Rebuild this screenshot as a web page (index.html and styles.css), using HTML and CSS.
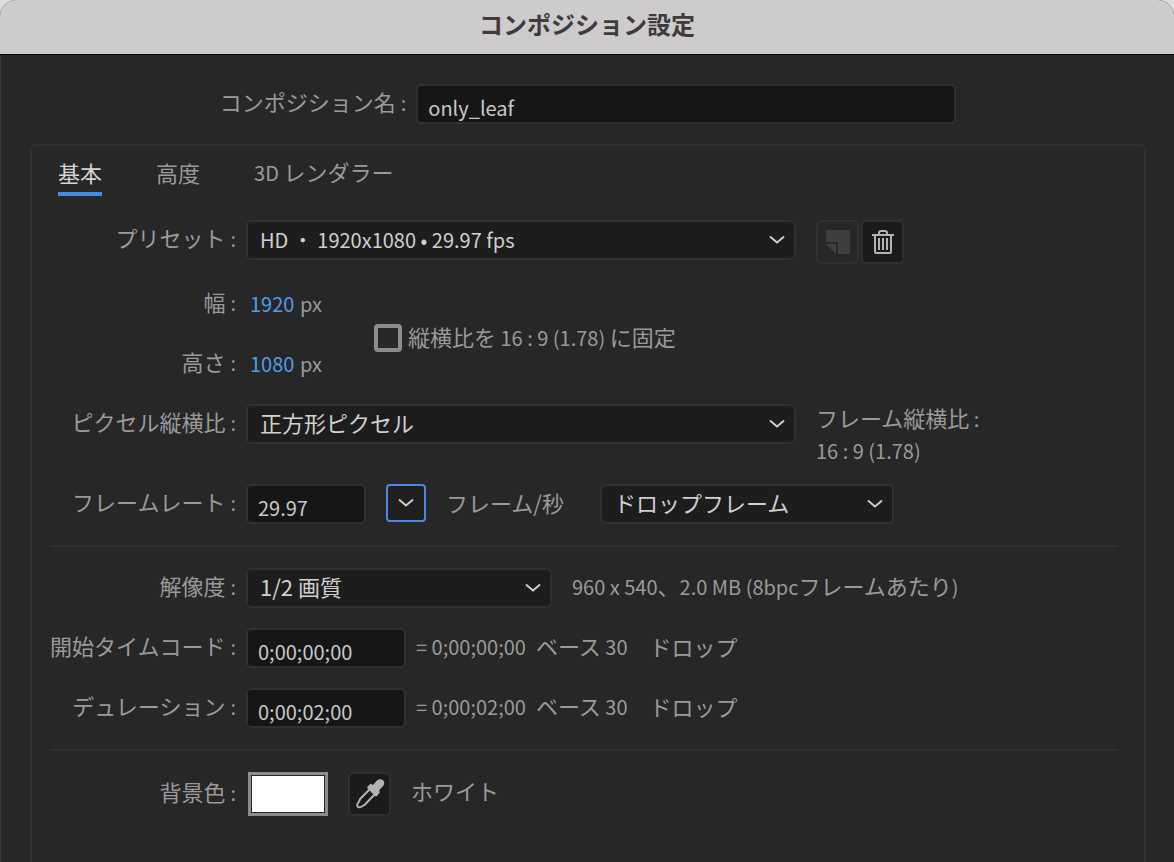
FILE: index.html
```
<!DOCTYPE html>
<html lang="ja">
<head>
<meta charset="utf-8">
<meta name="viewport" content="width=device-width, initial-scale=1">
<title>コンポジション設定</title>
<link rel="stylesheet" href="styles.css">
</head>
<body>
<svg class="defs" aria-hidden="true">
  <symbol id="chevron" viewBox="0 0 16 10"><path d="M1.500 2 8 7.500 14.500 2" fill="none" stroke="currentColor" stroke-width="1.900" stroke-linecap="round"/></symbol>
</svg>
<div class="dialog">
  <header class="titlebar"><h1>コンポジション設定</h1></header>
  <form class="content">
    <div class="name-row">
      <label class="label" for="name">コンポジション名<span class="latin colon">:</span></label>
      <input class="field name-field" id="name" type="text" value="only_leaf">
    </div>
    <section class="panel">
      <nav class="tabs" role="tablist">
        <button class="tab active" type="button" role="tab" aria-selected="true">基本</button>
        <button class="tab" type="button" role="tab">高度</button>
        <button class="tab" type="button" role="tab"><span class="latin">3D </span>レンダラー</button>
      </nav>

      <div class="row preset-row">
        <label class="label" for="preset">プリセット<span class="latin colon">:</span></label>
        <div class="controls">
          <span class="dropdown wide"><select class="latin" id="preset"><option>HD ・ 1920x1080 • 29.97 fps</option></select><svg class="chevron"><use href="#chevron"/></svg></span>
          <div class="tools">
            <button class="tool" type="button" disabled aria-label="プリセットを保存">
              <svg width="24" height="24" viewBox="0 0 24 24" fill="currentColor"><path d="M0 0h24v24H12V12H0z"/><path d="M0 14h10v10z"/></svg>
            </button>
            <button class="tool" type="button" aria-label="プリセットを削除">
              <svg width="22" height="24" viewBox="1 1 22 24" fill="none" stroke="currentColor" stroke-width="2"><path d="M1 6h22M8 5.500V4a2 2 0 0 1 2-2h4a2 2 0 0 1 2 2v1.500M4 6v17a1 1 0 0 0 1 1h14a1 1 0 0 0 1-1V6M8 9v12M12 9v12M16 9v12"/></svg>
            </button>
          </div>
        </div>
      </div>

      <div class="size-block">
        <div class="sizes">
          <div class="row">
            <label class="label" for="width">幅<span class="latin colon">:</span></label>
            <div class="controls latin"><input class="hot" id="width" type="text" value="1920"><span>px</span></div>
          </div>
          <div class="row">
            <label class="label" for="height">高さ<span class="latin colon">:</span></label>
            <div class="controls latin"><input class="hot" id="height" type="text" value="1080"><span>px</span></div>
          </div>
        </div>
        <label class="lock"><input class="check" type="checkbox"><span>縦横比を<span class="latin"> 16 : 9 (1.78) </span>に固定</span></label>
      </div>

      <div class="row">
        <label class="label" for="par">ピクセル縦横比<span class="latin colon">:</span></label>
        <div class="controls">
          <span class="dropdown wide"><select id="par"><option>正方形ピクセル</option></select><svg class="chevron"><use href="#chevron"/></svg></span>
          <p class="aspect">フレーム縦横比<span class="latin"> :</span><br><span class="latin">16 : 9 (1.78)</span></p>
        </div>
      </div>

      <div class="row rate-row">
        <label class="label" for="rate">フレームレート<span class="latin colon">:</span></label>
        <div class="controls">
          <input class="field rate" id="rate" type="text" value="29.97">
          <button class="rate-menu" type="button" aria-label="フレームレートを選択"><svg class="chevron"><use href="#chevron"/></svg></button>
          <span class="unit">フレーム/秒</span>
          <span class="dropdown drop"><select aria-label="ドロップフレーム"><option>ドロップフレーム</option></select><svg class="chevron"><use href="#chevron"/></svg></span>
        </div>
      </div>

      <hr>

      <div class="row">
        <label class="label" for="res">解像度<span class="latin colon">:</span></label>
        <div class="controls">
          <span class="dropdown res"><select id="res"><option>1/2 画質</option></select><svg class="chevron"><use href="#chevron"/></svg></span>
          <span class="memory"><span class="latin">960 x 540</span>、<span class="latin">2.0 MB (8bpc</span>フレームあたり<span class="latin">)</span></span>
        </div>
      </div>
      <div class="row">
        <label class="label" for="start">開始タイムコード<span class="latin colon">:</span></label>
        <div class="controls">
          <input class="field time" id="start" type="text" value="0;00;00;00">
          <span class="base"><span class="latin">= 0;00;00;00</span><span>ベース<span class="latin"> 30</span></span></span>
          <span class="mode">ドロップ</span>
        </div>
      </div>
      <div class="row">
        <label class="label" for="duration">デュレーション<span class="latin colon">:</span></label>
        <div class="controls">
          <input class="field time" id="duration" type="text" value="0;00;02;00">
          <span class="base"><span class="latin">= 0;00;02;00</span><span>ベース<span class="latin"> 30</span></span></span>
          <span class="mode">ドロップ</span>
        </div>
      </div>

      <hr>

      <div class="row color-row">
        <span class="label">背景色<span class="latin colon">:</span></span>
        <div class="controls">
          <button class="swatch" type="button" aria-label="背景色"></button>
          <button class="tool" type="button" aria-label="スポイト">
            <svg width="30" height="30" viewBox="0 0 30 30"><path d="M15.500 9.500 5.500 19.500c-.8.800-.8 2-1.500 3l-1.500 2.300c-.7 1.500-.2 3 1 3.400 1.800.6 3.200-.7 4.500-1.400.8-.4 1.500-.8 2.500-1.800L20 15" fill="none" stroke="currentColor" stroke-width="1.900" stroke-linejoin="round"/><path d="M12.700 7.500 15 5.200c1-.6 1.800-.2 3 .8L21.500 2c2-2.300 5-2.200 6.600-.7 1.600 1.700 1.500 4.500-.6 6.500L24 11.200c1 1.300 1 2 .3 3L22 17c-.8.700-1.500.5-2.200-.2L13 10c-.9-.9-1-1.700-.3-2.500z" fill="currentColor"/></svg>
          </button>
          <span class="color-name">ホワイト</span>
        </div>
      </div>
    </section>
  </form>
</div>
</body>
</html>
```
FILE: styles.css
```
* { box-sizing: border-box; }

body {
  margin: 0;
  background: #dedcdc;
  color: #9a9a9a;
  font: 22px/30px "Noto Sans CJK JP", sans-serif;
}

button, input, select { margin: 0; font: inherit; color: inherit; }
p, h1 { margin: 0; }
.defs { display: none; }
.latin { font-size: 20px; white-space: pre-wrap; }

.dialog {
  display: flex;
  flex-direction: column;
  min-height: 100vh;
  border-radius: 16px 16px 0 0;
  overflow: hidden;
  background: #272727;
}

.titlebar {
  padding: 9px 0 15px;
  border-bottom: 1px solid #000;
  background: #cdcbcb;
  color: #3d3b3c;
  text-align: center;
}
.titlebar h1 { font-size: 24px; line-height: 30px; font-weight: 700; }

.content {
  display: flex;
  flex: 1;
  flex-direction: column;
  padding: 29px 28px 0 29px;
  border-left: 1px solid #3a3a3a;
}

.name-row {
  display: flex;
  justify-content: center;
  align-items: center;
  gap: 10px;
  margin-bottom: 20px;
}

.label { padding-bottom: 4px; text-align: right; white-space: nowrap; }
.colon { margin-left: 5px; }

.field {
  height: 40px;
  min-width: 0;
  padding: 7px 10px 0;
  border: 2px solid #303030;
  border-radius: 5px;
  background: #161616;
  color: #c8c8c8;
  font-size: 20px;
}
.name-field { flex: 0 1 540px; }

.panel {
  flex: 1;
  padding: 10px 26px 40px 18px;
  border: 2px solid #303030;
  border-bottom: 0;
  border-radius: 5px 5px 0 0;
}

.tabs { display: flex; gap: 54px; padding-left: 8px; margin-bottom: 24px; }
.tab {
  padding: 0 0 4px;
  border: 0;
  border-bottom: 4px solid transparent;
  background: none;
}
.tab.active { border-color: #4b8ae3; color: #d4d4d4; }

.row {
  display: grid;
  grid-template-columns: 186px 1fr;
  column-gap: 10px;
  align-items: center;
  min-height: 40px;
  margin-bottom: 20px;
}
.controls { display: flex; align-items: center; height: 40px; }

.dropdown { display: grid; align-items: center; min-width: 0; color: #d0d0d0; }
.dropdown > * { grid-area: 1 / 1; }
.dropdown select {
  width: 100%;
  height: 40px;
  padding: 0 36px 4px 12px;
  border: 2px solid #303030;
  border-radius: 5px;
  background: #1d1d1d;
  appearance: none;
}
.dropdown select.latin { padding-bottom: 0; }
.chevron { width: 16px; height: 10px; }
.dropdown .chevron { justify-self: end; margin-right: 11px; pointer-events: none; }
.wide { flex: 0 1 550px; }
.drop { flex: 0 1 294px; }
.res { flex: 0 1 306px; }

.preset-row { margin-bottom: 24px; }
.tools { display: flex; gap: 2px; align-self: flex-start; margin-left: 20px; }
.tool {
  display: grid;
  place-items: center;
  width: 43px;
  height: 44px;
  padding: 0;
  border: 2px solid #303030;
  border-radius: 5px;
  background: #1b1b1b;
  color: #b4b4b4;
}
.tool:disabled { background: none; color: #3f3f3f; }

.size-block { display: flex; align-items: center; gap: 52px; }
.hot {
  width: 46px;
  padding: 0;
  border: 0;
  margin: 0 4px;
  background: none;
  color: #539bea;
}
.lock { display: flex; align-items: center; gap: 6px; margin-bottom: 12px; white-space: nowrap; }
.lock > span { padding-bottom: 2px; }
.check {
  appearance: none;
  width: 28px;
  height: 28px;
  border: 4px solid #8c8c8c;
  border-radius: 4px;
}

.aspect { margin-left: 20px; padding-top: 20px; white-space: nowrap; }

.rate-row { margin-top: 40px; }
.rate { flex: 0 1 120px; }
.rate-menu {
  display: grid;
  place-items: center;
  align-self: flex-start;
  width: 40px;
  height: 38px;
  margin: 0 20px;
  padding: 0;
  border: 2px solid #4b8ae3;
  border-radius: 4px;
  background: #1f1f1f;
  color: #d0d0d0;
}
.unit { margin-right: 36px; }
.unit, .memory, .base, .mode { padding-bottom: 4px; white-space: nowrap; }

hr { height: 2px; margin: 21px 0; border: 0; background: #303030; }

.memory { margin-left: 20px; }
.time { flex: 0 1 160px; }
.base { display: flex; align-items: baseline; gap: 10px; margin-left: 10px; }
.mode { margin-left: 22px; }

.color-row .controls { height: 44px; }
.swatch {
  width: 80px;
  height: 44px;
  margin: 0 20px 0 2px;
  padding: 1px;
  border: 3px solid #8c8c8c;
  background: #fff content-box;
}
.color-name { margin-left: 20px; padding-bottom: 8px; }
```
